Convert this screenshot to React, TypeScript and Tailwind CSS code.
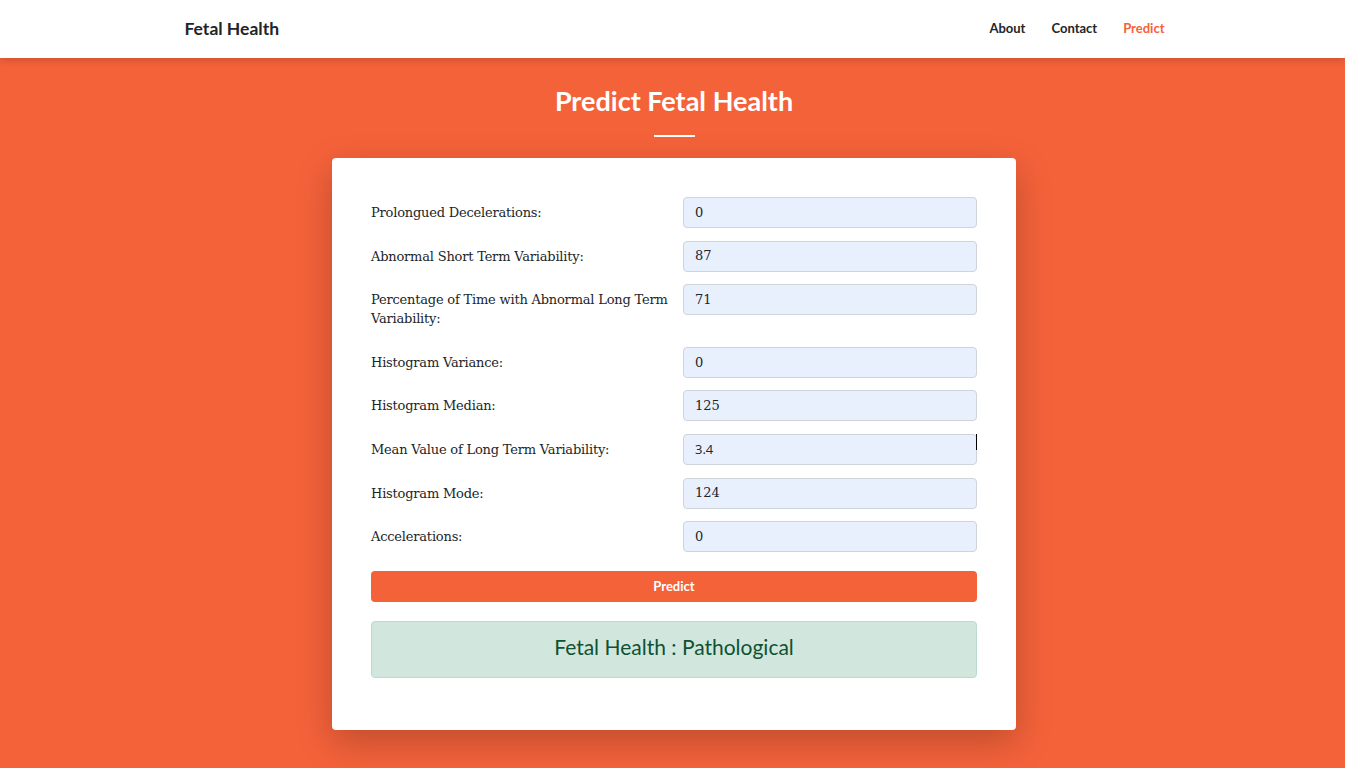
import React from "react";

const fields: { label: string; value: string; sans?: boolean }[] = [
  { label: "Prolongued Decelerations:", value: "0" },
  { label: "Abnormal Short Term Variability:", value: "87" },
  { label: "Percentage of Time with Abnormal Long Term Variability:", value: "71" },
  { label: "Histogram Variance:", value: "0" },
  { label: "Histogram Median:", value: "125" },
  { label: "Mean Value of Long Term Variability:", value: "3.4", sans: true },
  { label: "Histogram Mode:", value: "124" },
  { label: "Accelerations:", value: "0" },
];

export default function App() {
  return (
    <div className="min-h-screen bg-[#f4623a] font-['Lato',sans-serif]">
      <nav className="relative z-10 h-[58px] bg-white shadow-[0_2px_8px_rgba(0,0,0,0.18)]">
        <div className="mx-auto flex h-full w-[980px] translate-x-[2px] items-center justify-between">
          <span className="text-[17.5px] font-bold text-[#212529]">Fetal Health</span>
          <div className="flex items-center gap-[26px] text-[13px] font-bold">
            <span className="text-[#212529]">About</span>
            <span className="text-[#212529]">Contact</span>
            <span className="text-[#f4623a]">Predict</span>
          </div>
        </div>
      </nav>
      <div className="flex flex-col items-center pl-[3px]">
        <h1 className="mt-[27px] text-[27px] font-bold leading-[32px] text-white">Predict Fetal Health</h1>
        <div className="mt-[18px] h-[2px] w-[41px] bg-white" />
        <div className="mt-[21px] w-[684px] rounded-[4px] bg-white px-[39px] pt-[39px] pb-[52px] shadow-[0_12px_36px_rgba(0,0,0,0.22)] font-['DejaVu_Serif',serif]">
          <div className="flex flex-col gap-[12.6px]">
            {fields.map((f) => (
              <div key={f.label} className="flex items-start">
                <label className="w-[312px] py-[6px] pr-[10px] text-[13px] leading-[19px] text-[#212529] tracking-[-0.2px]">
                  {f.label}
                </label>
                <div className="relative">
                  <div
                    className={`flex h-[31px] w-[294px] items-center rounded-[4px] border border-[#ced4da] bg-[#e8f0fe] pl-[11px] text-[13px] text-[#212529] ${
                      f.sans ? "font-['Open_Sans',sans-serif]" : ""
                    }`}
                  >
                    {f.value}
                  </div>
                  {f.sans && <div className="absolute right-0 top-0 h-[16px] w-[1px] bg-black" />}
                </div>
              </div>
            ))}
          </div>
          <button className="mt-[19px] flex h-[31px] w-full items-center justify-center rounded-[4px] bg-[#f4623a] font-['Lato',sans-serif] text-[13px] font-bold text-white">
            Predict
          </button>
          <div className="mt-[19px] flex h-[57px] items-center justify-center rounded-[4px] border border-[#badbcc] bg-[#d1e7dd] pb-[6px] font-['Lato',sans-serif] text-[21px] text-[#0f5132]">
            Fetal Health : Pathological
          </div>
        </div>
      </div>
    </div>
  );
}
